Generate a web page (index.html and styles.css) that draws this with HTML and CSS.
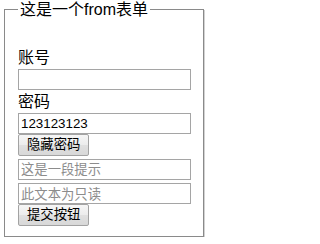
FILE: index.html
```html
<!DOCTYPE html>
<html lang="zh-CN">
<head>
<meta charset="utf-8">
<title>from表单</title>
<link rel="stylesheet" href="styles.css">
</head>
<body>
<form class="form">
  <fieldset class="box">
    <legend class="box-title">这是一个from表单</legend>
    <label class="field-label" for="account">账号</label>
    <input class="text-input" id="account" type="text">
    <label class="field-label" for="pwd">密码</label>
    <input class="text-input" id="pwd" type="text" value="123123123">
    <button class="btn btn-gap" type="button">隐藏密码</button>
    <input class="text-input input-gap" type="text" placeholder="这是一段提示">
    <input class="text-input readonly" type="text" value="此文本为只读" readonly>
    <button class="btn" type="submit">提交按钮</button>
  </fieldset>
</form>
</body>
</html>
```

FILE: styles.css
```css
html, body {
  margin: 0;
  padding: 0;
  background: #ffffff;
}

body {
  font-family: "Liberation Sans", "Noto Sans CJK SC", sans-serif;
  font-size: 16px;
  color: #000000;
}

.form {
  margin: 0;
}

.box {
  box-sizing: border-box;
  width: 200px;
  margin: 0 0 0 4px;
  padding: 27px 12px 10px 13px;
  border: 1px solid #8a8a8a;
  box-shadow: 1px 1px 0 #d2d2d2;
  display: flex;
  flex-direction: column;
  align-items: flex-start;
}

.box-title {
  padding: 0 2px;
  font-size: 16px;
  line-height: 19px;
}

.field-label {
  display: block;
  height: 23px;
  line-height: 23px;
  font-size: 16px;
}

.text-input {
  box-sizing: border-box;
  width: 173px;
  height: 21px;
  margin: 0;
  padding: 0 2px;
  border: 1px solid #a5a5a5;
  border-radius: 0;
  font-family: "Liberation Sans", "Noto Sans CJK SC", sans-serif;
  font-size: 13.33px;
  color: #000000;
  background: #ffffff;
  outline: none;
}

.text-input::placeholder {
  color: #8c8c8c;
}

.readonly {
  color: #8c8c8c;
}

.input-gap {
  margin-bottom: 3px;
}

.btn {
  box-sizing: border-box;
  height: 22px;
  margin: 0;
  padding: 0 8px;
  border: 1px solid #a3a3a3;
  border-radius: 2px;
  background: linear-gradient(#f6f6f6, #ececec 50%, #e0e0e0 50%, #d8d8d8);
  font-family: "Liberation Sans", "Noto Sans CJK SC", sans-serif;
  font-size: 13.33px;
  line-height: 20px;
  color: #000000;
}

.btn-gap {
  margin-bottom: 3px;
}
```
